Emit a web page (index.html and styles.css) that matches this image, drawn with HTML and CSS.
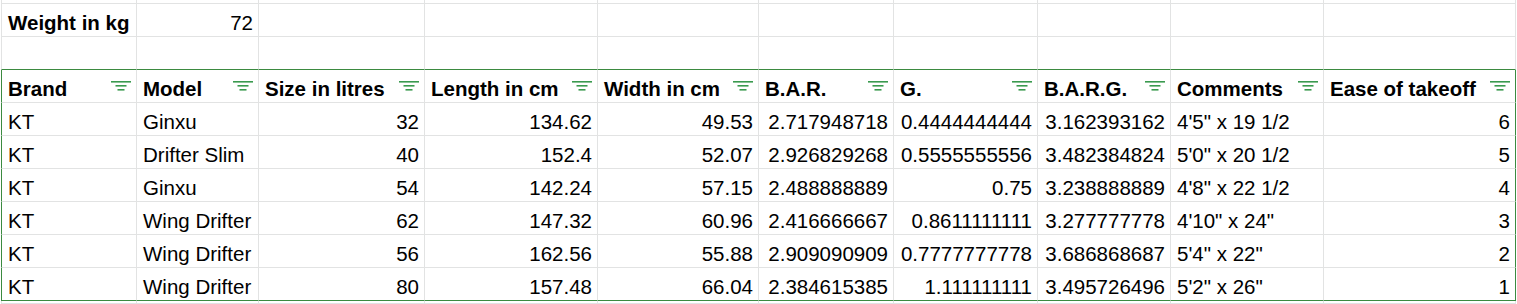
FILE: index.html
```html
<!DOCTYPE html>
<html>
<head>
<meta charset="utf-8">
<link rel="stylesheet" href="styles.css">
</head>
<body>
<div class="sheet">
  <!-- top stub row -->
  <div class="c"></div><div class="c"></div><div class="c"></div><div class="c"></div><div class="c"></div><div class="c"></div><div class="c"></div><div class="c"></div><div class="c"></div><div class="c"></div>
  <!-- weight row -->
  <div class="c b">Weight in kg</div><div class="c r">72</div><div class="c"></div><div class="c"></div><div class="c"></div><div class="c"></div><div class="c"></div><div class="c"></div><div class="c"></div><div class="c"></div>
  <!-- blank row -->
  <div class="c gb"></div><div class="c gb"></div><div class="c gb"></div><div class="c gb"></div><div class="c gb"></div><div class="c gb"></div><div class="c gb"></div><div class="c gb"></div><div class="c gb"></div><div class="c gb"></div>
  <!-- header row -->
  <div class="c h gl"><span>Brand</span><svg class="f" viewBox="0 0 20 10"><rect x="0" y="0" width="20" height="1.6"/><rect x="4.5" y="4" width="11" height="1.6"/><rect x="6.5" y="8" width="7" height="1.6"/></svg></div>
  <div class="c h"><span>Model</span><svg class="f" viewBox="0 0 20 10"><rect x="0" y="0" width="20" height="1.6"/><rect x="4.5" y="4" width="11" height="1.6"/><rect x="6.5" y="8" width="7" height="1.6"/></svg></div>
  <div class="c h"><span>Size in litres</span><svg class="f" viewBox="0 0 20 10"><rect x="0" y="0" width="20" height="1.6"/><rect x="4.5" y="4" width="11" height="1.6"/><rect x="6.5" y="8" width="7" height="1.6"/></svg></div>
  <div class="c h"><span>Length in cm</span><svg class="f" viewBox="0 0 20 10"><rect x="0" y="0" width="20" height="1.6"/><rect x="4.5" y="4" width="11" height="1.6"/><rect x="6.5" y="8" width="7" height="1.6"/></svg></div>
  <div class="c h"><span>Width in cm</span><svg class="f" viewBox="0 0 20 10"><rect x="0" y="0" width="20" height="1.6"/><rect x="4.5" y="4" width="11" height="1.6"/><rect x="6.5" y="8" width="7" height="1.6"/></svg></div>
  <div class="c h"><span>B.A.R.</span><svg class="f" viewBox="0 0 20 10"><rect x="0" y="0" width="20" height="1.6"/><rect x="4.5" y="4" width="11" height="1.6"/><rect x="6.5" y="8" width="7" height="1.6"/></svg></div>
  <div class="c h"><span>G.</span><svg class="f" viewBox="0 0 20 10"><rect x="0" y="0" width="20" height="1.6"/><rect x="4.5" y="4" width="11" height="1.6"/><rect x="6.5" y="8" width="7" height="1.6"/></svg></div>
  <div class="c h"><span>B.A.R.G.</span><svg class="f" viewBox="0 0 20 10"><rect x="0" y="0" width="20" height="1.6"/><rect x="4.5" y="4" width="11" height="1.6"/><rect x="6.5" y="8" width="7" height="1.6"/></svg></div>
  <div class="c h"><span>Comments</span><svg class="f" viewBox="0 0 20 10"><rect x="0" y="0" width="20" height="1.6"/><rect x="4.5" y="4" width="11" height="1.6"/><rect x="6.5" y="8" width="7" height="1.6"/></svg></div>
  <div class="c h gr"><span>Ease of takeoff</span><svg class="f" viewBox="0 0 20 10"><rect x="0" y="0" width="20" height="1.6"/><rect x="4.5" y="4" width="11" height="1.6"/><rect x="6.5" y="8" width="7" height="1.6"/></svg></div>
  <!-- data rows -->
  <div class="c gl">KT</div><div class="c">Ginxu</div><div class="c r">32</div><div class="c r">134.62</div><div class="c r">49.53</div><div class="c r">2.717948718</div><div class="c r">0.4444444444</div><div class="c r">3.162393162</div><div class="c">4'5" x 19 1/2</div><div class="c r gr">6</div>
  <div class="c gl">KT</div><div class="c">Drifter Slim</div><div class="c r">40</div><div class="c r">152.4</div><div class="c r">52.07</div><div class="c r">2.926829268</div><div class="c r">0.5555555556</div><div class="c r">3.482384824</div><div class="c">5'0" x 20 1/2</div><div class="c r gr">5</div>
  <div class="c gl">KT</div><div class="c">Ginxu</div><div class="c r">54</div><div class="c r">142.24</div><div class="c r">57.15</div><div class="c r">2.488888889</div><div class="c r">0.75</div><div class="c r">3.238888889</div><div class="c">4'8" x 22 1/2</div><div class="c r gr">4</div>
  <div class="c gl">KT</div><div class="c">Wing Drifter</div><div class="c r">62</div><div class="c r">147.32</div><div class="c r">60.96</div><div class="c r">2.416666667</div><div class="c r">0.8611111111</div><div class="c r">3.277777778</div><div class="c">4'10" x 24"</div><div class="c r gr">3</div>
  <div class="c gl">KT</div><div class="c">Wing Drifter</div><div class="c r">56</div><div class="c r">162.56</div><div class="c r">55.88</div><div class="c r">2.909090909</div><div class="c r">0.7777777778</div><div class="c r">3.686868687</div><div class="c">5'4" x 22"</div><div class="c r gr">2</div>
  <div class="c gl gb">KT</div><div class="c gb">Wing Drifter</div><div class="c r gb">80</div><div class="c r gb">157.48</div><div class="c r gb">66.04</div><div class="c r gb">2.384615385</div><div class="c r gb">1.111111111</div><div class="c r gb">3.495726496</div><div class="c gb">5'2" x 26"</div><div class="c r gr gb">1</div>
  <!-- bottom stub row -->
  <div class="c"></div><div class="c"></div><div class="c"></div><div class="c"></div><div class="c"></div><div class="c"></div><div class="c"></div><div class="c"></div><div class="c"></div><div class="c"></div>
</div>
</body>
</html>
```
FILE: styles.css
```css
html, body {
  margin: 0;
  padding: 0;
  background: #ffffff;
  overflow: hidden;
}

.sheet {
  display: grid;
  grid-template-columns: 136px 122px 166px 173px 161px 135px 144px 133px 153px 192px;
  grid-template-rows: 4px repeat(9, 33px) 3px;
  margin-left: 1px;
  width: max-content;
  font-family: "Liberation Sans", Arial, sans-serif;
  font-size: 20.5px;
  line-height: 24px;
  color: #000000;
}

.c {
  box-sizing: border-box;
  display: flex;
  align-items: flex-end;
  justify-content: flex-start;
  padding: 0 5px 1px 6px;
  border-right: 1px solid #e2e3e3;
  border-bottom: 1px solid #e2e3e3;
  white-space: nowrap;
  overflow: hidden;
  min-width: 0;
}

.c:nth-child(10n+1) {
  border-left: 1px solid #e2e3e3;
}

.r {
  justify-content: flex-end;
}

.b,
.h {
  font-weight: bold;
}

.h {
  justify-content: space-between;
}

.f {
  width: 20px;
  height: 10px;
  align-self: center;
  flex: none;
  fill: #3a9a4f;
}

.gl:nth-child(10n+1) {
  border-left-color: #3b8a40;
}

.gr {
  border-right-color: #3b8a40;
}

.gb {
  border-bottom-color: #3b8a40;
}
```
